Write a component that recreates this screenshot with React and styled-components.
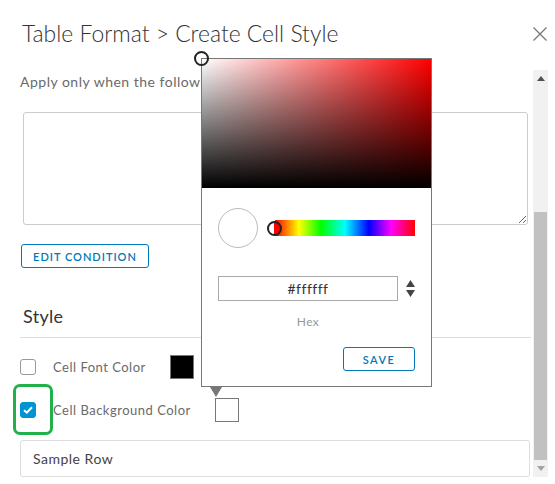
import React from 'react'
import styled, { createGlobalStyle } from 'styled-components'

const GlobalStyle = createGlobalStyle`
    body {
        margin: 0;
        background: #fff;
        font-family: Lato, "Open Sans", sans-serif;
    }
`

const Dialog = styled.div`
    position: relative;
    width: 555px;
    height: 484px;
    background: #fff;
    overflow: hidden;
`

const Header = styled.div`
    height: 70px;
    display: flex;
    justify-content: space-between;
    align-items: flex-start;
    padding: 18px 8px 0 22px;
    box-sizing: border-box;
`

const Title = styled.h2`
    margin: 0;
    font-size: 22.9px;
    line-height: 30px;
    font-weight: 300;
    color: #333;
`

const Close = styled.button`
    border: none;
    background: none;
    padding: 0;
    margin-top: 9px;
    width: 14px;
    height: 14px;
    cursor: pointer;
    display: flex;
`

const Body = styled.div`
    display: flex;
    height: 414px;
`

const Content = styled.div`
    width: 511px;
    padding-left: 20px;
    display: flex;
    flex-direction: column;
    align-items: flex-start;
    letter-spacing: 0.5px;
`

const Hint = styled.p`
    margin: 2px 0 0 0;
    font-size: 14px;
    line-height: 20px;
    color: #6a6a6a;
    white-space: nowrap;
`

const Condition = styled.textarea`
    margin: 20px 0 0 3px;
    width: 505px;
    height: 113px;
    box-sizing: border-box;
    border: 1px solid #ccc;
    border-radius: 3px;
    resize: vertical;
    outline: none;
`

const OutlineButton = styled.button`
    box-sizing: border-box;
    height: 24px;
    padding: 0;
    border: 1px solid #0079b8;
    border-radius: 3px;
    background: #fff;
    color: #0079b8;
    font-family: Lato, sans-serif;
    font-size: 11px;
    font-weight: 600;
    letter-spacing: 1px;
    white-space: nowrap;
    cursor: pointer;
`

const EditButton = styled(OutlineButton)`
    margin: 19px 0 0 1px;
    width: 128px;
`

const SectionTitle = styled.h3`
    margin: 36px 0 0 3px;
    font-size: 18px;
    line-height: 24px;
    font-weight: 400;
    letter-spacing: 0.3px;
    color: #333;
`

const Divider = styled.div`
    margin-top: 9px;
    width: 511px;
    height: 1px;
    background: #ddd;
`

const OptionList = styled.div`
    margin-top: 17px;
    display: flex;
    flex-direction: column;
    gap: 19px;
`

const Option = styled.label`
    display: flex;
    align-items: center;
    height: 24px;
    font-size: 13px;
    color: #6a6a6a;
`

const BoxWrap = styled.span`
    position: relative;
    display: flex;
    margin-right: 17px;
`

const Box = styled.span`
    width: 16px;
    height: 16px;
    box-sizing: border-box;
    border-radius: 3px;
    border: 1px solid ${p => (p.$checked ? '#0094d2' : '#999')};
    background: ${p => (p.$checked ? '#0094d2' : '#fff')};
    display: flex;
    align-items: center;
    justify-content: center;
`

const Highlight = styled.span`
    position: absolute;
    left: -7px;
    top: -18px;
    width: 40px;
    height: 51px;
    box-sizing: border-box;
    border: 3px solid #22b04b;
    border-radius: 7px;
`

const Swatch = styled.span`
    margin-left: 24px;
    width: 24px;
    height: 24px;
    box-sizing: border-box;
    border: 1px solid #777;
    background: ${p => p.$color};
`

const Sample = styled.div`
    margin-top: 18px;
    width: 510px;
    height: 37px;
    box-sizing: border-box;
    border: 1px solid #ddd;
    border-radius: 3px;
    padding-left: 12px;
    display: flex;
    align-items: center;
    font-size: 14px;
    color: #444;
    background: ${p => p.$bg || '#fff'};
`

const Scrollbar = styled.div`
    margin-left: 2px;
    width: 15px;
    height: 407px;
    background: #f1f1f1;
    display: flex;
    flex-direction: column;
    align-items: center;
`

const ScrollArrow = styled.div`
    height: 17px;
    display: flex;
    align-items: center;
    justify-content: center;
`

const Thumb = styled.div`
    margin-top: ${p => p.$offset}px;
    width: 13px;
    height: ${p => p.$size}px;
    background: #c1c1c1;
`

const Spacer = styled.div`
    flex: 1;
`

/* colour picker popover */

const Picker = styled.div`
    position: absolute;
    left: 201px;
    top: 58px;
    width: 231px;
    height: 329px;
    box-sizing: border-box;
    border: 1px solid #777;
    background: #fff;
    display: flex;
    flex-direction: column;

    &::after {
        content: '';
        position: absolute;
        left: 8px;
        bottom: -11px;
        border-left: 6px solid transparent;
        border-right: 6px solid transparent;
        border-top: 10px solid #777;
    }
`

const Saturation = styled.div`
    position: relative;
    height: 129px;
    background:
        linear-gradient(to top, #000, rgba(0, 0, 0, 0)),
        linear-gradient(to right, #fff, ${p => p.$hue});
`

const Handle = styled.span`
    position: absolute;
    width: 15px;
    height: 15px;
    box-sizing: border-box;
    border-radius: 50%;
    border: 2px solid #222;
`

const SatHandle = styled(Handle)`
    left: -8px;
    top: -8px;
`

const HueRow = styled.div`
    margin-top: 20px;
    padding: 0 16px;
    display: flex;
    align-items: center;
`

const Preview = styled.span`
    width: 40px;
    height: 40px;
    box-sizing: border-box;
    border-radius: 50%;
    border: 1px solid #bbb;
    background: ${p => p.$color};
`

const HueBar = styled.div`
    position: relative;
    margin-left: 17px;
    flex: 1;
    height: 16px;
    background: linear-gradient(to right, #f00, #ff0 17%, #0f0 33%, #0ff 50%, #00f 67%, #f0f 83%, #f00);
`

const HueHandle = styled(Handle)`
    left: -8px;
    top: 1px;
    background: linear-gradient(to right, #fff 50%, #f00 50%);
`

const HexRow = styled.div`
    margin-top: 28px;
    padding: 0 16px;
    display: flex;
    align-items: center;
`

const HexInput = styled.input`
    width: 180px;
    height: 25px;
    box-sizing: border-box;
    border: 1px solid #aaa;
    text-align: center;
    font-family: Lato, sans-serif;
    font-size: 14px;
    letter-spacing: 0.5px;
    color: #333;
    outline: none;
`

const Stepper = styled.span`
    margin-left: 8px;
    display: flex;
`

const HexLabel = styled.div`
    width: 180px;
    margin: 13px 0 0 16px;
    text-align: center;
    font-size: 12px;
    line-height: 16px;
    letter-spacing: 0.4px;
    color: #999;
`

const Actions = styled.div`
    margin-top: 17px;
    padding: 0 16px;
    display: flex;
    justify-content: flex-end;
`

const SaveButton = styled(OutlineButton)`
    width: 72px;
    letter-spacing: 1.4px;
`

const Check = () => (
    <svg width="10" height="8" viewBox="0 0 10 8">
        <path d="M1 4.2 L3.8 6.6 L9 1.2" fill="none" stroke="#fff" strokeWidth="2" />
    </svg>
)

const Triangle = ({ up, color }) => (
    <svg width="8" height="5" viewBox="0 0 8 5">
        <path d={up ? 'M0 5 L4 0 L8 5 Z' : 'M0 0 L4 5 L8 0 Z'} fill={color} />
    </svg>
)

const options = [
    { label: 'Cell Font Color', color: '#000', checked: false },
    { label: 'Cell Background Color', color: '#fff', checked: true },
]

export default function App() {
    const hex = '#ffffff'
    return (
        <Dialog>
            <GlobalStyle />
            <Header>
                <Title>Table Format &gt; Create Cell Style</Title>
                <Close aria-label="Close">
                    <svg width="14" height="14" viewBox="0 0 14 14">
                        <path d="M0.5 0.5 L13.5 13.5 M13.5 0.5 L0.5 13.5" stroke="#777" strokeWidth="1.3" />
                    </svg>
                </Close>
            </Header>
            <Body>
                <Content>
                    <Hint>Apply only when the following condition is met</Hint>
                    <Condition />
                    <EditButton>EDIT CONDITION</EditButton>
                    <SectionTitle>Style</SectionTitle>
                    <Divider />
                    <OptionList>
                        {options.map(o => (
                            <Option key={o.label}>
                                <BoxWrap>
                                    <Box $checked={o.checked}>{o.checked && <Check />}</Box>
                                    {o.checked && <Highlight />}
                                </BoxWrap>
                                {o.label}
                                <Swatch $color={o.color} />
                            </Option>
                        ))}
                    </OptionList>
                    <Sample>Sample Row</Sample>
                </Content>
                <Scrollbar>
                    <ScrollArrow><Triangle up color="#505050" /></ScrollArrow>
                    <Thumb $offset={125} $size={248} />
                    <Spacer />
                    <ScrollArrow><Triangle color="#a3a3a3" /></ScrollArrow>
                </Scrollbar>
            </Body>

            <Picker>
                <Saturation $hue="#f00">
                    <SatHandle />
                </Saturation>
                <HueRow>
                    <Preview $color={hex} />
                    <HueBar>
                        <HueHandle />
                    </HueBar>
                </HueRow>
                <HexRow>
                    <HexInput defaultValue={hex} />
                    <Stepper>
                        <svg width="9" height="17" viewBox="0 0 9 17">
                            <path d="M0 7 L4.5 0 L9 7 Z M0 10 L4.5 17 L9 10 Z" fill="#444" />
                        </svg>
                    </Stepper>
                </HexRow>
                <HexLabel>Hex</HexLabel>
                <Actions>
                    <SaveButton>SAVE</SaveButton>
                </Actions>
            </Picker>
        </Dialog>
    )
}
